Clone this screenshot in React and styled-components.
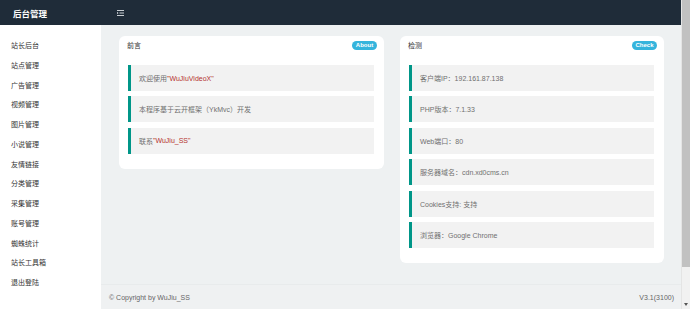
import React from 'react';
import styled, { createGlobalStyle } from 'styled-components';

const GlobalStyle = createGlobalStyle`
  body {
    margin: 0;
    background: #eef1f2;
    font-family: "Liberation Sans", "Noto Sans CJK SC", sans-serif;
  }
`;

const Frame = styled.div`
  display: grid;
  grid-template-columns: 101px 1fr 9px;
  grid-template-rows: 25px 1fr;
  height: 100vh;
  overflow: hidden;
`;

const Brand = styled.div`
  background: #1f2c39;
  color: #fff;
  font-size: 8.5px;
  font-weight: bold;
  display: flex;
  align-items: center;
  padding-left: 13px;
`;

const Topbar = styled.div`
  background: #1f2c39;
  display: flex;
  align-items: center;
  padding-left: 16px;
`;

const Scrollbar = styled.div`
  grid-column: 3;
  grid-row: 1 / span 2;
  background: #f1f1f1;
  border-left: 1px solid #e4e4e4;
  display: flex;
  flex-direction: column;
  align-items: center;
`;

const Thumb = styled.div`
  width: 100%;
  height: 267px;
  background: #c1c1c1;
`;

const Arrow = styled.div`
  margin-top: auto;
  margin-bottom: 3px;
  width: 0;
  height: 0;
  border-left: 2px solid transparent;
  border-right: 2px solid transparent;
  border-top: 3px solid #555;
`;

const Sidebar = styled.nav`
  background: #fff;
  padding-top: 11px;
  display: flex;
  flex-direction: column;
`;

const NavItem = styled.a`
  height: 19.75px;
  line-height: 19.75px;
  padding-left: 11px;
  font-size: 7px;
  color: #333;
  text-decoration: none;
`;

const Main = styled.main`
  display: flex;
  flex-direction: column;
  min-height: 0;
`;

const Content = styled.div`
  flex: 1;
  display: grid;
  grid-template-columns: 265px 264px;
  gap: 16px;
  align-items: start;
  padding: 11px 16px 0 18px;
`;

const Card = styled.section`
  background: #fff;
  border-radius: 6px;
  padding: 0 10px 15px 9px;
`;

const CardHead = styled.div`
  height: 18px;
  display: flex;
  align-items: center;
  justify-content: space-between;
  margin: 0 -3px 0 -1px;
  font-size: 7px;
  color: #333;
`;

const Badge = styled.span`
  background: #35b4dc;
  color: #fff;
  font-size: 6px;
  font-weight: bold;
  height: 9px;
  line-height: 9px;
  width: 25px;
  text-align: center;
  border-radius: 5px;
`;

const Quotes = styled.div`
  display: flex;
  flex-direction: column;
  gap: 5.4px;
  margin-top: 11px;
`;

const Quote = styled.div`
  height: 26px;
  display: flex;
  align-items: center;
  background: #f2f2f2;
  border-left: 3px solid #009688;
  padding-left: 8px;
  font-size: 7px;
  color: #707070;
`;

const Mark = styled.span`
  color: #b5332e;
`;

const Footer = styled.footer`
  height: 24px;
  display: flex;
  align-items: center;
  justify-content: space-between;
  padding: 0 7px 0 8px;
  background: #eff1f2;
  border-top: 1px solid #e8ebec;
  font-size: 7px;
  color: #666;
`;

const MenuIcon = () => (
  <svg width="7" height="6" viewBox="0 0 7 6">
    <g stroke="#c8cdd2" strokeWidth="1">
      <line x1="0" y1="0.5" x2="7" y2="0.5" />
      <line x1="2.5" y1="3" x2="7" y2="3" />
      <line x1="0" y1="5.5" x2="7" y2="5.5" />
    </g>
    <path d="M0 1.8 L1.6 3 L0 4.2 Z" fill="#c8cdd2" />
  </svg>
);

const navItems = [
  '站长后台', '站点管理', '广告管理', '视频管理', '图片管理', '小说管理',
  '友情链接', '分类管理', '采集管理', '账号管理', '蜘蛛统计', '站长工具箱', '退出登陆'
];

const checks = [
  '客户端IP：192.161.87.138',
  'PHP版本：7.1.33',
  'Web端口：80',
  '服务器域名：cdn.xd0cms.cn',
  'Cookies支持: 支持',
  '浏览器：Google Chrome'
];

export default function App() {
  return (
    <>
      <GlobalStyle />
      <Frame>
        <Brand>后台管理</Brand>
        <Topbar>
          <MenuIcon />
        </Topbar>
        <Scrollbar>
          <Thumb />
          <Arrow />
        </Scrollbar>
        <Sidebar>
          {navItems.map(item => (
            <NavItem key={item}>{item}</NavItem>
          ))}
        </Sidebar>
        <Main>
          <Content>
            <Card>
              <CardHead>
                <span>前言</span>
                <Badge>About</Badge>
              </CardHead>
              <Quotes>
                <Quote>欢迎使用<Mark>"WuJiuVideoX"</Mark></Quote>
                <Quote>本程序基于云开框架（YkMvc）开发</Quote>
                <Quote>联系<Mark>"WuJiu_SS"</Mark></Quote>
              </Quotes>
            </Card>
            <Card>
              <CardHead>
                <span>检测</span>
                <Badge>Check</Badge>
              </CardHead>
              <Quotes>
                {checks.map(c => (
                  <Quote key={c}>{c}</Quote>
                ))}
              </Quotes>
            </Card>
          </Content>
          <Footer>
            <span>© Copyright by WuJiu_SS</span>
            <span>V3.1(3100)</span>
          </Footer>
        </Main>
      </Frame>
    </>
  );
}
